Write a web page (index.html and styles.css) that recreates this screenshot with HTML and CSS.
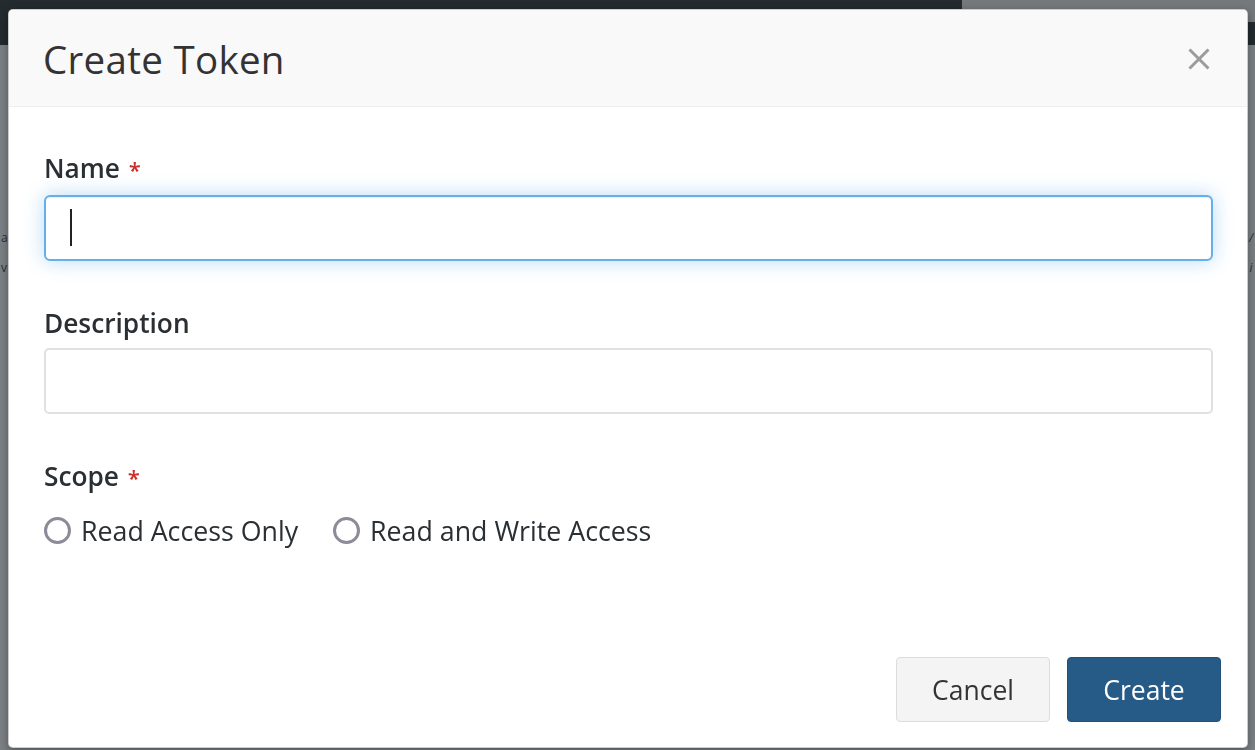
FILE: index.html
```html
<!DOCTYPE html>
<html lang="en">
<head>
<meta charset="utf-8">
<title>Create Token</title>
<link rel="stylesheet" href="styles.css">
</head>
<body>
  <div class="page">
    <header class="topbar">
      <div class="topbar-main"></div>
      <div class="topbar-side">
        <div class="topbar-tabs"></div>
        <div class="topbar-fill"></div>
      </div>
    </header>
    <main class="content">
      <div class="content-row">
        <span class="cell">a</span>
        <span class="cell cell-right">/</span>
      </div>
      <div class="content-row">
        <span class="cell">v</span>
        <span class="cell cell-right">i</span>
      </div>
    </main>
  </div>

  <div class="modal" role="dialog" aria-labelledby="modal-title">
    <div class="modal-header">
      <h4 class="modal-title" id="modal-title">Create Token</h4>
      <button class="close" type="button" aria-label="Close">
        <svg width="22" height="22" viewBox="0 0 22 22" aria-hidden="true">
          <path d="M1.5 1.5 L20.5 20.5 M20.5 1.5 L1.5 20.5" stroke="#9b9b9b" stroke-width="3" fill="none"/>
        </svg>
      </button>
    </div>

    <div class="modal-body">
      <div class="form-group">
        <label class="control-label">Name <span class="required">*</span></label>
        <div class="form-control is-focused"><span class="caret"></span></div>
      </div>
      <div class="form-group">
        <label class="control-label">Description</label>
        <div class="form-control"></div>
      </div>
      <div class="form-group">
        <label class="control-label">Scope <span class="required">*</span></label>
        <div class="radio-row">
          <label class="radio"><span class="radio-dot"></span>Read Access Only</label>
          <label class="radio"><span class="radio-dot"></span>Read and Write Access</label>
        </div>
      </div>
    </div>

    <div class="modal-footer">
      <button class="btn btn-default" type="button">Cancel</button>
      <button class="btn btn-primary" type="button">Create</button>
    </div>
  </div>
</body>
</html>
```

FILE: styles.css
```css
* {
  box-sizing: border-box;
}

html,
body {
  margin: 0;
  height: 100%;
}

body {
  background: #7b8084;
  font-family: "Open Sans", "Liberation Sans", sans-serif;
  color: #333;
  overflow: hidden;
}

/* page behind the dialog, dimmed by the backdrop */
.page {
  height: 100%;
}

.topbar {
  display: flex;
  height: 45px;
}

.topbar-main {
  flex: 0 0 962px;
  background: #232b2f;
}

.topbar-side {
  flex: 1;
  display: flex;
  flex-direction: column;
}

.topbar-tabs {
  height: 22px;
  background: #75797c;
}

.topbar-fill {
  flex: 1;
  background: #232b2f;
}

.content {
  padding-top: 178px;
}

.content-row {
  display: flex;
  justify-content: space-between;
  font-size: 12px;
  line-height: 30px;
  color: #2b3134;
  padding: 0 1px;
}

.cell {
  width: 6px;
  text-align: center;
}

.cell-right {
  font-style: italic;
}

/* dialog */
.modal {
  position: fixed;
  left: 8px;
  top: 9px;
  width: 1240px;
  height: 739px;
  background: #fff;
  border: 1px solid rgba(0, 0, 0, 0.2);
  border-radius: 5px;
  box-shadow: 0 3px 9px rgba(0, 0, 0, 0.35);
  display: flex;
  flex-direction: column;
  overflow: hidden;
}

.modal-header {
  height: 97px;
  flex: 0 0 97px;
  display: flex;
  align-items: center;
  justify-content: space-between;
  padding: 2px 37px 0 34px;
  background: #f9f9f9;
  border-bottom: 1px solid #eeeeee;
}

.modal-title {
  margin: 0;
  font-size: 38.5px;
  font-weight: 400;
  line-height: 1;
  color: #333;
  letter-spacing: 0.3px;
}

.close {
  display: flex;
  padding: 0;
  margin: 0;
  border: 0;
  background: none;
}

.modal-body {
  padding: 43px 34px 0 35px;
}

.form-group {
  margin-bottom: 44px;
}

.control-label {
  display: block;
  font-size: 26.25px;
  line-height: 37.5px;
  font-weight: 600;
  color: #2a2f33;
  margin-bottom: 6px;
}

.required {
  color: #c9302c;
  font-size: 22px;
  margin-left: 2px;
}

.form-control {
  height: 66px;
  border: 2px solid #e1e1e1;
  border-radius: 5px;
  background: #fff;
  padding: 10px 24px;
  display: flex;
  align-items: center;
}

.form-control.is-focused {
  border-color: #66afe9;
  border-radius: 6px;
  box-shadow: inset 0 1px 1px rgba(0, 0, 0, 0.075), 0 0 20px rgba(102, 175, 233, 0.45);
}

.caret {
  width: 2px;
  height: 37px;
  background: #222;
}

.radio-row {
  display: flex;
  gap: 35px;
  margin-top: 15px;
}

.radio {
  display: flex;
  align-items: center;
  gap: 10px;
  font-size: 26.75px;
  line-height: 37.5px;
  color: #2a2f33;
}

.radio-dot {
  width: 27px;
  height: 27px;
  border: 3.5px solid #8d8b99;
  border-radius: 50%;
  background: #fff;
}

.modal-footer {
  margin-top: auto;
  display: flex;
  justify-content: flex-end;
  gap: 17px;
  padding: 0 26px 25px;
}

.btn {
  width: 154px;
  height: 65px;
  border-radius: 4px;
  font-family: "Open Sans", "Liberation Sans", sans-serif;
  font-size: 26.5px;
  padding: 0;
}

.btn-default {
  background: #f4f4f4;
  border: 1px solid #dcdcdc;
  color: #333;
}

.btn-primary {
  background: #265a87;
  border: 1px solid #22517a;
  color: #fff;
}
```
